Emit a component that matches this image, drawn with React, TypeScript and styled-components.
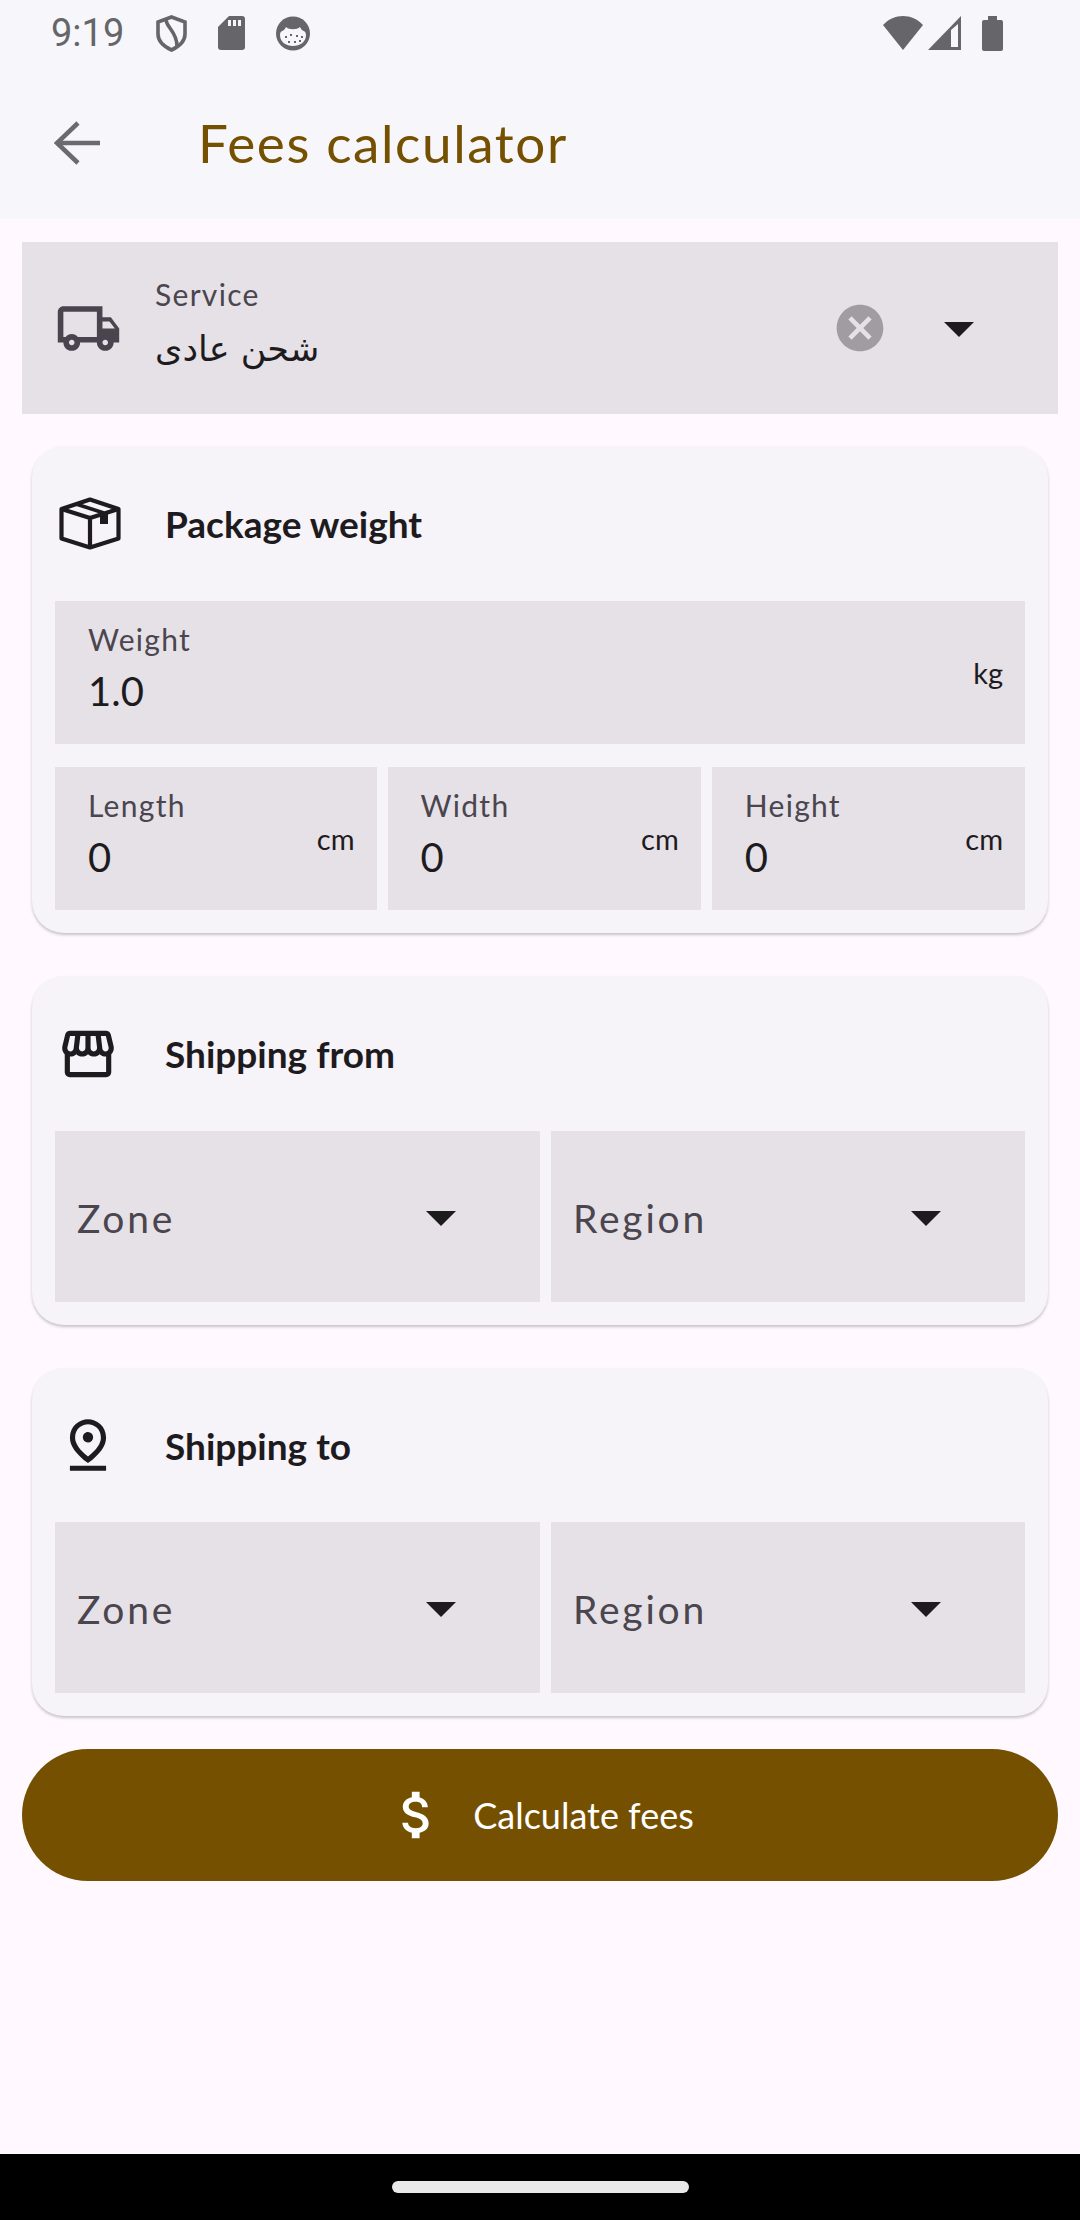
import React from 'react';
import styled, { createGlobalStyle } from 'styled-components';
import {
  MdArrowDropDown,
  MdAttachMoney,
  MdCancel,
  MdOutlineLocalShipping,
  MdOutlinePinDrop,
  MdOutlineStorefront,
} from 'react-icons/md';

const GlobalStyle = createGlobalStyle`
  html, body {
    margin: 0;
    padding: 0;
    background: #fff9ff;
  }
  body {
    font-family: "Lato", "Noto Sans", "DejaVu Sans", sans-serif;
  }
`;

const Screen = styled.div`
  width: 1080px;
  height: 2220px;
  display: flex;
  flex-direction: column;
  background: #fff9ff;
  overflow: hidden;
`;

const TopArea = styled.div`
  height: 219px;
  background: #f7f7fb;
`;

const StatusBar = styled.div`
  height: 66px;
  display: flex;
  align-items: center;
  padding: 0 77px 0 51px;
  color: #666569;
`;

const Time = styled.span`
  font-family: "Roboto", sans-serif;
  font-size: 38px;
  width: 105px;
`;

const LeftIcons = styled.div`
  display: flex;
  align-items: center;
  gap: 31px;
`;

const RightIcons = styled.div`
  display: flex;
  align-items: center;
  gap: 5px;

  svg:last-child {
    margin-left: 15px;
  }
`;

const Spacer = styled.div`
  flex: 1;
`;

const AppBar = styled.div`
  height: 153px;
  display: flex;
  align-items: center;
  padding: 0 0 18px 54px;
`;

const PageTitle = styled.h1`
  margin: 0 0 0 96px;
  font-size: 53px;
  font-weight: 400;
  letter-spacing: 1.6px;
  color: #745000;
`;

const Content = styled.main`
  flex: 1;
  display: flex;
  flex-direction: column;
  padding: 23px 22px 0;
`;

const ServiceField = styled.div`
  height: 172px;
  display: flex;
  align-items: center;
  background: #e5e1e6;
  padding: 0 63px 0 33px;
`;

const ServiceText = styled.div`
  flex: 1;
  margin-left: 33px;
  padding-bottom: 9px;
`;

const SmallLabel = styled.div`
  font-size: 30px;
  line-height: 38px;
  letter-spacing: 1.3px;
  color: #4a454e;
`;

const ArabicValue = styled.div`
  font-family: "DejaVu Sans", sans-serif;
  font-size: 35px;
  line-height: 48px;
  margin-top: 12px;
  color: #1e1b1e;
`;

const Card = styled.section<{ $top: number; $height: number }>`
  margin: ${p => p.$top}px 10px 0;
  height: ${p => p.$height}px;
  padding: 0 23px;
  box-sizing: border-box;
  border-radius: 32px;
  background: #f6f3f9;
  box-shadow: 0 2px 3px rgba(0, 0, 0, 0.22);
`;

const CardHead = styled.div<{ $height: number }>`
  height: ${p => p.$height}px;
  display: flex;
  align-items: center;
`;

const HeadIcon = styled.div`
  width: 66px;
  display: flex;
  justify-content: center;
  color: #1e1b1e;
`;

const CardTitle = styled.h2`
  margin: 0 0 0 44px;
  font-size: 37px;
  font-weight: 700;
  color: #1e1b1e;
`;

const Row = styled.div`
  display: flex;
  gap: 11px;
`;

const InputField = styled.div<{ $flex?: number }>`
  flex: ${p => p.$flex ?? 1};
  height: 143px;
  position: relative;
  background: #e5e1e6;
  box-sizing: border-box;
  padding: 19px 22px 0 33px;
`;

const InputValue = styled.div`
  font-size: 40px;
  line-height: 48px;
  margin-top: 9px;
  color: #1e1b1e;
`;

const Unit = styled.span`
  position: absolute;
  right: 22px;
  top: 53px;
  font-size: 29px;
  line-height: 38px;
  color: #1e1b1e;
`;

const WeightRow = styled(Row)`
  margin-bottom: 23px;
`;

const SelectField = styled.div<{ $width: number }>`
  width: ${p => p.$width}px;
  height: 171px;
  display: flex;
  align-items: center;
  background: #e5e1e6;
  box-sizing: border-box;
  padding: 0 63px 0 22px;
`;

const SelectText = styled.span`
  flex: 1;
  padding-top: 2px;
  font-size: 39px;
  letter-spacing: 2.8px;
  color: #4a454e;
`;

const SubmitButton = styled.button`
  height: 132px;
  margin-top: 33px;
  border: none;
  border-radius: 66px;
  background: #745000;
  color: #fff;
  font-family: inherit;
  font-size: 36px;
  display: flex;
  align-items: center;
  justify-content: center;
  gap: 25px;
`;

const NavBar = styled.div`
  height: 66px;
  display: flex;
  align-items: center;
  justify-content: center;
  background: #000;
`;

const Handle = styled.div`
  width: 297px;
  height: 12px;
  border-radius: 6px;
  background: #e9e9e9;
`;

const ClearIcon = styled(MdCancel)`
  color: #a09da2;
  margin-right: 35px;
`;

const Caret = styled(MdArrowDropDown)`
  color: #1e1b1e;
  flex: none;
`;

const ShieldIcon = () => (
  <svg width="31" height="37" viewBox="0 0 31 37" fill="none" stroke="#666569" strokeWidth="3.6">
    <path d="M15.5 2 L29 7 V19 C29 27 22 32 15.5 35 C9 32 2 27 2 19 V7 Z" />
    <path d="M10 5 C11 13 21 17 21 31" />
  </svg>
);

const SdIcon = () => (
  <svg width="27" height="34" viewBox="0 0 27 34">
    <path fill="#666569" d="M11 0 H24 a3 3 0 0 1 3 3 V31 a3 3 0 0 1 -3 3 H3 a3 3 0 0 1 -3 -3 V11 Z" />
    <path fill="#f7f7fb" d="M10 4 h3 v6 h-3 z M15 4 h3 v6 h-3 z M20 4 h3 v6 h-3 z" />
  </svg>
);

const CookieIcon = () => (
  <svg width="34" height="35" viewBox="0 0 34 35">
    <circle cx="17" cy="17.5" r="17" fill="#666569" />
    <path fill="#f7f7fb" d="M4 19 C4 14 8 16 10 11 C13 14 21 14 24 11 C26 16 30 14 30 19 C30 26 24 30 17 30 C10 30 4 26 4 19 Z" />
    <path fill="#666569" d="M9 20 h2 v2 h-2 z M14 18 h2 v2 h-2 z M20 19 h2 v2 h-2 z M25 20 h2 v2 h-2 z M12 25 h2 v2 h-2 z M18 25 h2 v2 h-2 z M23 24 h2 v2 h-2 z" />
  </svg>
);

const WifiIcon = () => (
  <svg width="40" height="34" viewBox="0 0 40 34">
    <path fill="#666569" d="M0 9 C11 -3 29 -3 40 9 L20 34 Z" />
  </svg>
);

const SignalIcon = () => (
  <svg width="34" height="35" viewBox="0 0 34 35">
    <path fill="#666569" d="M0 34 L33 0 V34 Z" />
    <path fill="#f7f7fb" d="M23 14 L30 8 V31 H23 Z" />
  </svg>
);

const BatteryIcon = () => (
  <svg width="21" height="35" viewBox="0 0 21 35">
    <path fill="#666569" d="M6 0 H15 V4 H19 a2 2 0 0 1 2 2 V33 a2 2 0 0 1 -2 2 H2 a2 2 0 0 1 -2 -2 V6 a2 2 0 0 1 2 -2 H6 Z" />
  </svg>
);

const BackIcon = () => (
  <svg width="48" height="44" viewBox="0 0 48 44" fill="none" stroke="#6b6a70" strokeWidth="4.5">
    <path d="M24 2 L3 22 L24 42" />
    <path d="M3 22 H46" />
  </svg>
);

const BoxIcon = () => (
  <svg width="66" height="53" viewBox="-4 0 66 53" fill="none" stroke="#1e1b1e" strokeWidth="4.2" strokeLinejoin="round">
    <path d="M31 2.5 L59.5 12 V41.5 L31 50.5 L2.5 41.5 V12 Z" />
    <path d="M2.5 12 L31 21 L59.5 12 M31 21 V50.5" />
    <path strokeWidth="3.6" d="M17 7 L45 16" />
    <path stroke="none" fill="#1e1b1e" d="M41 17 L49 14.5 V27 H41 Z" />
  </svg>
);

const Selects = () => (
  <Row>
    <SelectField $width={485}>
      <SelectText>Zone</SelectText>
      <Caret size={72} />
    </SelectField>
    <SelectField $width={474}>
      <SelectText>Region</SelectText>
      <Caret size={72} />
    </SelectField>
  </Row>
);

const App: React.FC = () => (
  <>
    <GlobalStyle />
    <Screen>
      <TopArea>
        <StatusBar>
          <Time>9:19</Time>
          <LeftIcons>
            <ShieldIcon />
            <SdIcon />
            <CookieIcon />
          </LeftIcons>
          <Spacer />
          <RightIcons>
            <WifiIcon />
            <SignalIcon />
            <BatteryIcon />
          </RightIcons>
        </StatusBar>
        <AppBar>
          <BackIcon />
          <PageTitle>Fees calculator</PageTitle>
        </AppBar>
      </TopArea>
      <Content>
        <ServiceField>
          <MdOutlineLocalShipping size={67} color="#49454e" />
          <ServiceText>
            <SmallLabel>Service</SmallLabel>
            <ArabicValue>شحن عادى</ArabicValue>
          </ServiceText>
          <ClearIcon size={56} />
          <Caret size={72} />
        </ServiceField>

        <Card $top={32} $height={487}>
          <CardHead $height={155}>
            <HeadIcon><BoxIcon /></HeadIcon>
            <CardTitle>Package weight</CardTitle>
          </CardHead>
          <WeightRow>
            <InputField>
              <SmallLabel>Weight</SmallLabel>
              <InputValue>1.0</InputValue>
              <Unit>kg</Unit>
            </InputField>
          </WeightRow>
          <Row>
            <InputField $flex={323}>
              <SmallLabel>Length</SmallLabel>
              <InputValue>0</InputValue>
              <Unit>cm</Unit>
            </InputField>
            <InputField $flex={313}>
              <SmallLabel>Width</SmallLabel>
              <InputValue>0</InputValue>
              <Unit>cm</Unit>
            </InputField>
            <InputField $flex={313}>
              <SmallLabel>Height</SmallLabel>
              <InputValue>0</InputValue>
              <Unit>cm</Unit>
            </InputField>
          </Row>
        </Card>

        <Card $top={43} $height={349}>
          <CardHead $height={155}>
            <HeadIcon><MdOutlineStorefront size={62} /></HeadIcon>
            <CardTitle>Shipping from</CardTitle>
          </CardHead>
          <Selects />
        </Card>

        <Card $top={43} $height={348}>
          <CardHead $height={154}>
            <HeadIcon><MdOutlinePinDrop size={62} /></HeadIcon>
            <CardTitle>Shipping to</CardTitle>
          </CardHead>
          <Selects />
        </Card>

        <SubmitButton>
          <MdAttachMoney size={62} />
          Calculate fees
        </SubmitButton>
      </Content>
      <NavBar>
        <Handle />
      </NavBar>
    </Screen>
  </>
);

export default App;
